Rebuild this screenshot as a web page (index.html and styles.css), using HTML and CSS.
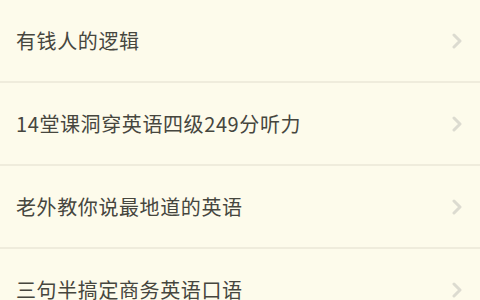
FILE: index.html
```html
<!DOCTYPE html>
<html lang="zh-CN">
<head>
  <meta charset="UTF-8">
  <title>课程列表</title>
  <link rel="stylesheet" href="styles.css">
</head>
<body>
  <ul class="course-list">
    <li class="course-item">
      <span class="course-title">有钱人的逻辑</span>
      <svg class="chevron" viewBox="0 0 10 16"><path d="M2 2 L8 8 L2 14"/></svg>
    </li>
    <li class="course-item">
      <span class="course-title">14堂课洞穿英语四级249分听力</span>
      <svg class="chevron" viewBox="0 0 10 16"><path d="M2 2 L8 8 L2 14"/></svg>
    </li>
    <li class="course-item">
      <span class="course-title">老外教你说最地道的英语</span>
      <svg class="chevron" viewBox="0 0 10 16"><path d="M2 2 L8 8 L2 14"/></svg>
    </li>
    <li class="course-item">
      <span class="course-title">三句半搞定商务英语口语</span>
      <svg class="chevron" viewBox="0 0 10 16"><path d="M2 2 L8 8 L2 14"/></svg>
    </li>
  </ul>
</body>
</html>
```

FILE: styles.css
```css
body {
  margin: 0;
  background: #fdfbeb;
  font-family: "Noto Sans CJK SC", "Noto Sans", sans-serif;
  overflow: hidden;
}
.course-list {
  list-style: none;
  margin: 0;
  padding: 0;
}
.course-item {
  display: flex;
  align-items: center;
  justify-content: space-between;
  height: 81px;
  padding: 0 18px 0 16px;
  border-bottom: 2px solid #efecdc;
}
.course-title {
  font-size: 20px;
  color: #46463e;
  letter-spacing: 0.6px;
}
.chevron {
  width: 10px;
  height: 16px;
  fill: none;
  stroke: #dcdbd0;
  stroke-width: 3;
  stroke-linecap: round;
  stroke-linejoin: round;
}
```
